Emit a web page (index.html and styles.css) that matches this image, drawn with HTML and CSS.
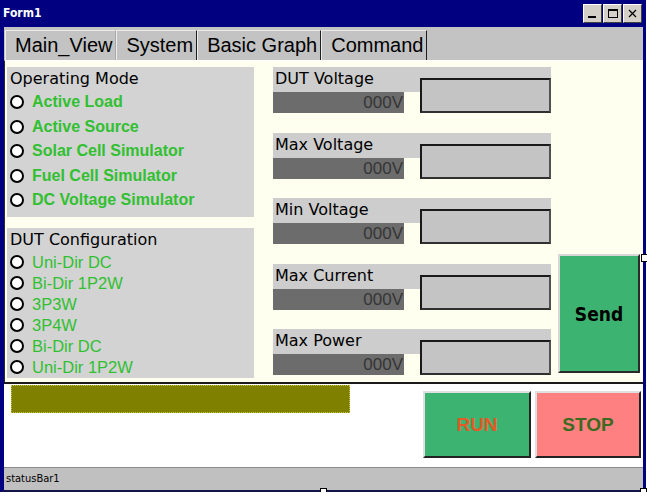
FILE: index.html
```html
<!DOCTYPE html>
<html lang="en">
<head>
    <meta charset="UTF-8">
    <meta name="viewport" content="width=device-width, initial-scale=1.0">
    <title>Form1</title>
    <link rel="stylesheet" href="styles.css">
</head>
<body>
<div class="window">
    <div class="titlebar">
        <span class="title">Form1</span>
        <div class="caption-btns">
            <div class="cap-btn">
                <svg width="13" height="13" viewBox="0 0 13 13"><rect x="2" y="9" width="8" height="2" fill="#000"/></svg>
            </div>
            <div class="cap-btn">
                <svg width="13" height="13" viewBox="0 0 13 13"><rect x="2.5" y="2.5" width="9" height="8" fill="none" stroke="#000"/><rect x="2" y="2" width="10" height="2" fill="#000"/></svg>
            </div>
            <div class="cap-btn">
                <svg width="13" height="13" viewBox="0 0 13 13"><path d="M3 3 L10 10 M10 3 L3 10" stroke="#000" stroke-width="1.2"/></svg>
            </div>
        </div>
    </div>

    <div class="tabstrip">
        <div class="tab tab-first">Main_View</div>
        <div class="tab">System</div>
        <div class="tab">Basic Graph</div>
        <div class="tab">Command</div>
    </div>

    <div class="panel">
        <div class="groups">
            <div class="group op">
                <div class="group-title">Operating Mode</div>
                <div class="option"><span class="radio"></span>Active Load</div>
                <div class="option"><span class="radio"></span>Active Source</div>
                <div class="option"><span class="radio"></span>Solar Cell Simulator</div>
                <div class="option"><span class="radio"></span>Fuel Cell Simulator</div>
                <div class="option"><span class="radio"></span>DC Voltage Simulator</div>
            </div>
            <div class="group dut">
                <div class="group-title">DUT Configuration</div>
                <div class="option"><span class="radio"></span>Uni-Dir DC</div>
                <div class="option"><span class="radio"></span>Bi-Dir 1P2W</div>
                <div class="option"><span class="radio"></span>3P3W</div>
                <div class="option"><span class="radio"></span>3P4W</div>
                <div class="option"><span class="radio"></span>Bi-Dir DC</div>
                <div class="option"><span class="radio"></span>Uni-Dir 1P2W</div>
            </div>
        </div>

        <div class="fields">
            <div class="field">
                <div class="field-label">DUT Voltage</div>
                <div class="field-value">000V</div>
                <input class="field-input" type="text">
            </div>
            <div class="field">
                <div class="field-label">Max Voltage</div>
                <div class="field-value">000V</div>
                <input class="field-input" type="text">
            </div>
            <div class="field">
                <div class="field-label">Min Voltage</div>
                <div class="field-value">000V</div>
                <input class="field-input" type="text">
            </div>
            <div class="field">
                <div class="field-label">Max Current</div>
                <div class="field-value">000V</div>
                <input class="field-input" type="text">
            </div>
            <div class="field">
                <div class="field-label">Max Power</div>
                <div class="field-value">000V</div>
                <input class="field-input" type="text">
            </div>
        </div>

        <button class="send">Send</button>
    </div>

    <div class="lower">
        <div class="olive"></div>
        <div class="actions">
            <button class="run">RUN</button>
            <button class="stop">STOP</button>
        </div>
    </div>

    <div class="statusbar">statusBar1</div>

    <div class="handle handle-bottom"></div>
    <div class="handle handle-corner"></div>
    <div class="handle handle-right"></div>
</div>
</body>
</html>
```

FILE: styles.css
```css
body {
    margin: 0;
    padding: 0;
    background: #fff;
    font-family: "DejaVu Sans", sans-serif;
}

.window {
    position: relative;
    width: 646px;
    height: 492px;
    box-sizing: border-box;
    border-left: 4px solid #000080;
    border-right: 3px solid #000080;
    border-bottom: 2px solid #14144a;
    display: flex;
    flex-direction: column;
}

/* title bar */
.titlebar {
    height: 27px;
    flex: none;
    margin: 0 -3px 0 -4px;
    padding: 4px 4px 0 3px;
    box-sizing: border-box;
    background: #000080;
    display: flex;
    align-items: flex-start;
}

.title {
    color: #fff;
    font-family: "DejaVu Sans Condensed", "DejaVu Sans", sans-serif;
    font-weight: bold;
    font-size: 12px;
    line-height: 19px;
}

.caption-btns {
    margin-left: auto;
    display: flex;
    gap: 1px;
}

.cap-btn {
    width: 19px;
    height: 19px;
    box-sizing: border-box;
    background: #d4d0c8;
    border: 1px solid;
    border-color: #fff #404040 #404040 #fff;
    display: flex;
    align-items: center;
    justify-content: center;
}

/* tabs */
.tabstrip {
    height: 33px;
    flex: none;
    background: #c3c3c3;
    padding: 3px 0 0 1px;
    box-sizing: border-box;
    display: flex;
    align-items: flex-end;
}

.tab {
    height: 30px;
    box-sizing: border-box;
    padding: 0 3px 0 9px;
    font-family: "Liberation Sans", Arial, sans-serif;
    font-size: 20px;
    line-height: 28px;
    color: #000;
    border-left: 1px solid #ececec;
    border-top: 1px solid #ececec;
    border-right: 1px solid #1e1e1e;
}

.tab-first {
    border-right-color: #a8a8a8;
}

/* panel */
.panel {
    height: 324px;
    flex: none;
    box-sizing: border-box;
    background: #fffff0;
    border-top: 1px solid #fff;
    border-left: 1px solid #2a2a2a;
    border-bottom: 2px solid #1a1a1a;
    padding: 6px 0 4px 2px;
    display: flex;
}

.groups {
    width: 247px;
    display: flex;
    flex-direction: column;
    gap: 11px;
}

.group {
    height: 150px;
    box-sizing: border-box;
    background: #d3d3d3;
    padding-left: 3px;
}

.group-title {
    height: 23px;
    line-height: 23px;
    font-size: 16px;
    color: #000;
}

.dut .group-title {
    height: 23.5px;
}

.option {
    display: flex;
    align-items: center;
    gap: 8px;
    height: 24.5px;
    font-family: "Liberation Sans", Arial, sans-serif;
    font-weight: bold;
    font-size: 16px;
    color: #30c030;
}

.dut .option {
    height: 21px;
    font-weight: normal;
    font-size: 16.5px;
}

.radio {
    width: 14px;
    height: 14px;
    box-sizing: border-box;
    border: 2px solid #000;
    border-radius: 50%;
    background: #fff;
}

/* fields */
.fields {
    margin-left: 19px;
    width: 278px;
    display: flex;
    flex-direction: column;
    gap: 19.5px;
}

.field {
    display: grid;
    grid-template-columns: 131px 16px 131px;
    grid-template-rows: 11px 14px 21px;
}

.field-label {
    grid-column: 1 / 4;
    grid-row: 1 / 3;
    background: #cdcdcd;
    padding-left: 2px;
    font-size: 16px;
    line-height: 23px;
    color: #000;
}

.field-value {
    grid-column: 1;
    grid-row: 3;
    background: #6c6c6c;
    padding-right: 1px;
    text-align: right;
    font-family: "Liberation Sans", Arial, sans-serif;
    font-size: 17px;
    line-height: 21px;
    color: #353535;
}

.field-input {
    grid-column: 3;
    grid-row: 2 / 4;
    margin: 0;
    padding: 0;
    width: 100%;
    height: 100%;
    box-sizing: border-box;
    background: #c4c4c4;
    border: 2px solid #1a1a1a;
    border-right-color: #505050;
    border-bottom-color: #303030;
    outline: none;
}

.send {
    align-self: flex-end;
    margin: 0 0 5px 7px;
    width: 82px;
    height: 119px;
    padding: 0;
    background: #3cb371;
    border: 2px solid;
    border-color: #d8d8d8 #2a2a2a #2a2a2a #d8d8d8;
    font-family: "DejaVu Sans Condensed", "DejaVu Sans", sans-serif;
    font-weight: bold;
    font-size: 19px;
    color: #000;
}

/* lower area */
.lower {
    height: 83px;
    flex: none;
    display: flex;
    align-items: flex-start;
    background: #fff;
}

.olive {
    width: 339px;
    height: 28px;
    margin: 1px 0 0 7px;
    box-sizing: border-box;
    background: #808000;
    border: 1px dotted #c8c840;
}

.actions {
    margin: 7px 2px 0 auto;
    display: flex;
    gap: 4px;
}

.run, .stop {
    height: 67px;
    padding: 0;
    border: 2px solid;
    border-color: #e0e0e0 #222 #222 #e0e0e0;
    font-family: "Liberation Sans", Arial, sans-serif;
    font-weight: bold;
    font-size: 19px;
}

.run {
    width: 108px;
    background: #3cb371;
    color: #e35a26;
}

.stop {
    width: 106px;
    background: #ff8080;
    color: #3b6a20;
}

/* status bar */
.statusbar {
    height: 23px;
    flex: none;
    box-sizing: border-box;
    background: #c0c0c0;
    border-top: 1px solid #8c8c8c;
    padding-left: 2px;
    font-family: "DejaVu Sans Condensed", "DejaVu Sans", sans-serif;
    font-size: 11px;
    line-height: 22px;
    color: #000;
}

/* designer handles */
.handle {
    position: absolute;
    width: 5px;
    height: 6px;
    background: #fff;
    border: 1px solid #000;
}

.handle-bottom {
    left: 316px;
    top: 488px;
}

.handle-corner {
    left: 636px;
    top: 488px;
}

.handle-right {
    left: 637px;
    top: 254px;
}
```
